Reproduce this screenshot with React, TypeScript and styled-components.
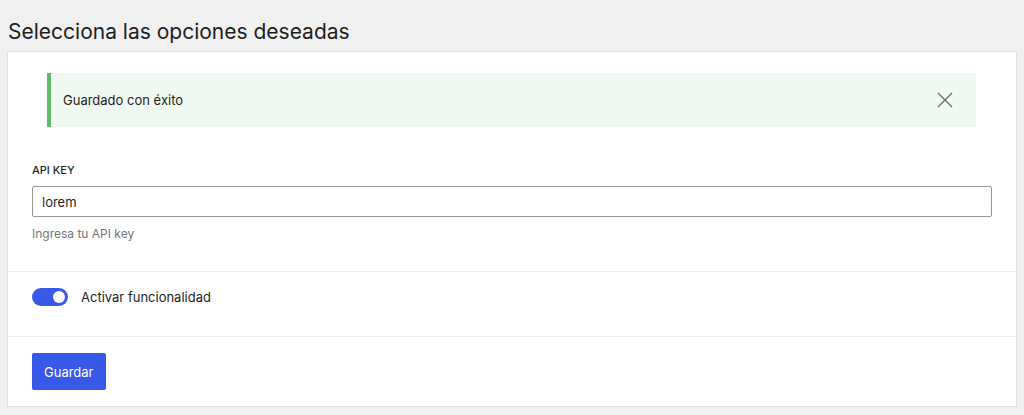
import styled, { createGlobalStyle } from "styled-components";

const GlobalStyle = createGlobalStyle`
  html, body {
    margin: 0;
    padding: 0;
    background: #f0f0f0;
  }
  body {
    font-family: Inter, "Noto Sans", sans-serif;
    color: #1e1e1e;
  }
  * {
    box-sizing: border-box;
  }
`

const CloseIcon = () => (
    <svg width="18" height="18" viewBox="0 0 18 18" fill="none">
        <path d="M2 2L16 16M16 2L2 16" stroke="#6b6b6b" strokeWidth="1.4"/>
    </svg>
)

export default function App() {
    return (
        <Page>
            <GlobalStyle/>
            <PageTitle>Clave de registro</PageTitle>
            <Title>Selecciona las opciones deseadas</Title>
            <Card>
                <CardBody>
                    <Notice>
                        <NoticeText>Guardado con éxito</NoticeText>
                        <DismissButton aria-label="Cerrar">
                            <CloseIcon/>
                        </DismissButton>
                    </Notice>
                    <Field>
                        <Label htmlFor="api-key">API KEY</Label>
                        <TextInput id="api-key" defaultValue="lorem"/>
                        <Help>Ingresa tu API key</Help>
                    </Field>
                </CardBody>
                <CardBody>
                    <ToggleRow>
                        <Toggle $checked>
                            <Thumb $checked/>
                        </Toggle>
                        <ToggleLabel>Activar funcionalidad</ToggleLabel>
                    </ToggleRow>
                </CardBody>
                <CardBody>
                    <PrimaryButton>Guardar</PrimaryButton>
                </CardBody>
            </Card>
        </Page>
    )
}

const Page = styled.div`
  padding: 0 7px 8px;
`

// page heading scrolled almost out of view, only a descender peeks in
const PageTitle = styled.h1`
  margin: -28px 0 0 1px;
  font-size: 22px;
  line-height: 30px;
  font-weight: 400;
  color: #1e1e1e;
`

const Title = styled.h2`
  margin: 0 0 0 1px;
  padding: 17px 0 0;
  font-size: 21px;
  line-height: 26px;
  font-weight: 400;
  color: #1e1e1e;
  height: 49px;
`

const Card = styled.div`
  background: #fff;
  border: 1px solid #e0e0e0;
`

const CardBody = styled.div`
  padding: 16px 24px;
  & + & {
    border-top: 1px solid #f0f0f0;
  }
`

const Notice = styled.div`
  display: flex;
  align-items: center;
  justify-content: space-between;
  margin: 5px 16px 0 15px;
  height: 54px;
  padding: 0 22px 0 12px;
  background: #eff9f1;
  border-left: 4px solid #64b86a;
`

const NoticeText = styled.span`
  font-size: 13px;
  color: #1e1e1e;
`

const DismissButton = styled.button`
  display: flex;
  align-items: center;
  justify-content: center;
  padding: 0;
  border: 0;
  background: transparent;
  cursor: pointer;
`

const Field = styled.div`
  display: flex;
  flex-direction: column;
  margin-top: 36px;
  padding-bottom: 13px;
`

const Label = styled.label`
  font-size: 11px;
  line-height: 15px;
  font-weight: 500;
  text-transform: uppercase;
  margin-bottom: 8px;
`

const TextInput = styled.input`
  height: 31px;
  width: 100%;
  padding: 0 9px;
  border: 1px solid #949494;
  border-radius: 2px;
  font-family: Inter, "Noto Sans", sans-serif;
  font-size: 13px;
  color: #1e1e1e;
  outline: none;
`

const Help = styled.p`
  margin: 9px 0 0;
  font-size: 12px;
  line-height: 16px;
  color: #757575;
`

const ToggleRow = styled.div`
  display: flex;
  align-items: center;
  gap: 13px;
  height: 18px;
  margin-bottom: 14px;
`

const Toggle = styled.span<{ $checked?: boolean }>`
  position: relative;
  display: inline-block;
  width: 36px;
  height: 18px;
  border-radius: 9px;
  background: ${p => p.$checked ? "#3858e9" : "#fff"};
  border: ${p => p.$checked ? "none" : "1px solid #1e1e1e"};
`

const Thumb = styled.span<{ $checked?: boolean }>`
  position: absolute;
  top: 3px;
  left: ${p => p.$checked ? "21px" : "3px"};
  width: 12px;
  height: 12px;
  border-radius: 50%;
  background: ${p => p.$checked ? "#fff" : "#1e1e1e"};
`

const ToggleLabel = styled.span`
  font-size: 13px;
  color: #1e1e1e;
`

const PrimaryButton = styled.button`
  height: 37px;
  padding: 0 12px;
  border: 0;
  border-radius: 2px;
  background: #3858e9;
  color: #fff;
  font-family: Inter, "Noto Sans", sans-serif;
  font-size: 13px;
  cursor: pointer;
  &:hover {
    opacity: 0.9;
  }
`
